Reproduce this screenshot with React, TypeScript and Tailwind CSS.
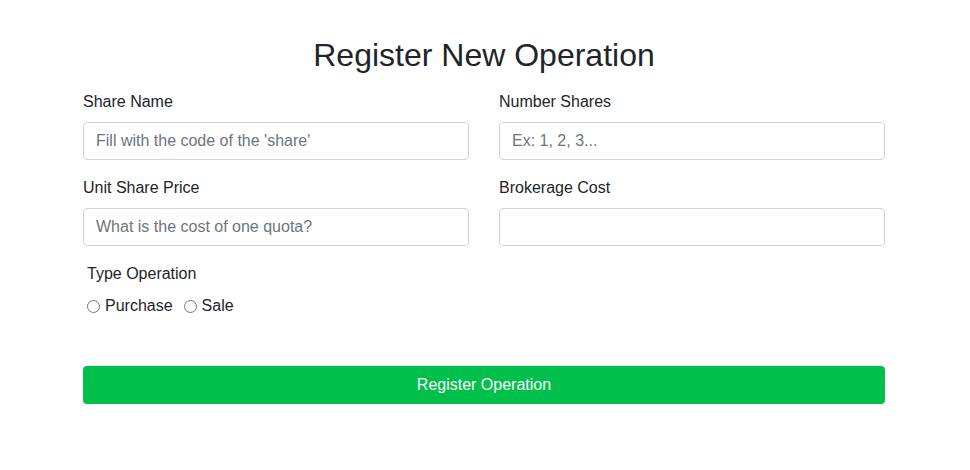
export default function App() {
  return (
    <div className="min-h-[470px] bg-white font-['Liberation_Sans',Arial,sans-serif] text-[#212529]">
      <div className="ml-[83px] w-[802px] pt-9">
        <h1 className="text-center text-[32px] leading-[38px]">Register New Operation</h1>

        <div className="mt-4 grid grid-cols-2 gap-x-[30px] gap-y-4">
          <div>
            <label className="mb-2 block text-base leading-6">Share Name</label>
            <input
              className="block h-[38px] w-full rounded border border-[#ced4da] px-3 text-base text-[#495057] outline-none placeholder:text-[#6c757d]"
              placeholder="Fill with the code of the 'share'"
            />
          </div>
          <div>
            <label className="mb-2 block text-base leading-6">Number Shares</label>
            <input
              className="block h-[38px] w-full rounded border border-[#ced4da] px-3 text-base text-[#495057] outline-none placeholder:text-[#6c757d]"
              placeholder="Ex: 1, 2, 3..."
            />
          </div>
          <div>
            <label className="mb-2 block text-base leading-6">Unit Share Price</label>
            <input
              className="block h-[38px] w-full rounded border border-[#ced4da] px-3 text-base text-[#495057] outline-none placeholder:text-[#6c757d]"
              placeholder="What is the cost of one quota?"
            />
          </div>
          <div>
            <label className="mb-2 block text-base leading-6">Brokerage Cost</label>
            <input className="block h-[38px] w-full rounded border border-[#ced4da] px-3 text-base text-[#495057] outline-none" />
          </div>
        </div>

        <div className="mt-4 pl-1">
          <p className="text-base leading-6">Type Operation</p>
          <div className="mt-2 flex items-center text-base leading-6">
            <label className="flex items-center">
              <input type="radio" name="type" className="m-0 h-[13px] w-[13px]" />
              <span className="ml-[5px]">Purchase</span>
            </label>
            <label className="ml-[11px] flex items-center">
              <input type="radio" name="type" className="m-0 h-[13px] w-[13px]" />
              <span className="ml-[5px]">Sale</span>
            </label>
          </div>
        </div>

        <button className="mt-12 block h-[38px] w-full rounded bg-[#00bf4a] text-base text-white">
          Register Operation
        </button>
      </div>
    </div>
  );
}
